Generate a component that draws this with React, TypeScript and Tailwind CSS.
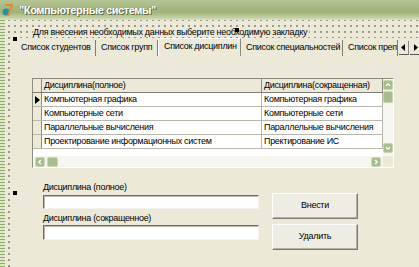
import React from "react";

const rows = [
  ["Компьютерная графика", "Компьютерная графика"],
  ["Компьютерные сети", "Компьютерные сети"],
  ["Параллельные вычисления", "Параллельные вычисления"],
  ["Проектирование информационных систем", "Пректирование ИС"],
];

const tabs = [
  { label: "Список студентов", w: "w-[80px]" },
  { label: "Список групп", w: "w-[62px]" },
  { label: "Список дисциплин", w: "w-[83px]", active: true },
  { label: "Список специальностей", w: "w-[102px]" },
  { label: "Список преподавателей", w: "w-[55px]" },
];

const chevrons: Record<string, string> = {
  up: "M2.5 6 L5 3.5 L7.5 6",
  down: "M2.5 4 L5 6.5 L7.5 4",
  left: "M6 2.5 L3.5 5 L6 7.5",
  right: "M4 2.5 L6.5 5 L4 7.5",
};

const ScrollBtn = ({ dir }: { dir: string }) => (
  <div className="w-[10px] h-[10px] shrink-0 bg-[#a9bd8c] border border-[#c8d5b2] rounded-[2px] flex items-center justify-center">
    <svg width="10" height="10" viewBox="0 0 10 10">
      <path d={chevrons[dir]} fill="none" stroke="#ffffff" strokeWidth="1.6" />
    </svg>
  </div>
);

const Handle = ({ cls }: { cls: string }) => (
  <div className={"absolute w-[4px] h-[4px] bg-black " + cls} />
);

export default function App() {
  return (
    <div className="relative w-[419px] h-[267px] overflow-hidden bg-[#ece9d8] flex flex-col font-['Liberation_Sans',Arial,sans-serif] text-[9px] tracking-[-0.3px] text-black">
      {/* title bar */}
      <div className="h-[20px] shrink-0 flex items-center gap-[6px] pl-[2px] bg-[linear-gradient(180deg,#b4c494_0%,#9fb278_60%,#c6d2a9_90%,#dde5c8_100%)]">
        <svg width="11" height="13" viewBox="0 0 11 13">
          <circle cx="4" cy="8" r="3.5" fill="#2f8fa0" />
          <path d="M3 1 L10 1 L6 12" fill="none" stroke="#e08a2a" strokeWidth="2" />
        </svg>
        <span className="text-[11px] font-bold text-white tracking-[-0.4px] [text-shadow:1px_1px_0_#5d6b3e,-1px_0_0_#7d8a5c]">
          "Компьютерные системы"
        </span>
      </div>

      <div className="flex flex-1">
        {/* left frame strip */}
        <div className="w-[5px] shrink-0 bg-[repeating-linear-gradient(180deg,#8fae62_0px,#8fae62_1px,#dfe6cc_1px,#dfe6cc_3px)]" />

        <div className="flex-1 flex flex-col bg-[#ece9d8] bg-[radial-gradient(#9c9a8c_0.8px,transparent_1px)] bg-[size:6px_6px] bg-[position:1px_3px]">
          <div className="h-[18px] shrink-0 pt-[7px] pl-[28px]">
            <span className="bg-[#ece9d8] leading-[10px] block w-fit pr-[2px]">
              Для внесения необходимых данных выберите необходимую закладку
            </span>
          </div>

          <div className="flex-1 ml-[7px] bg-[#ece9d8] flex flex-col">
            {/* tabs */}
            <div className="h-[18px] shrink-0 flex items-end pl-[4px]">
              {tabs.map((t) => (
                <div
                  key={t.label}
                  className={
                    "shrink-0 overflow-hidden whitespace-nowrap flex items-center px-[5px] " +
                    t.w +
                    (t.active
                      ? " h-[18px] pb-[2px] border-l border-t border-r border-l-white border-t-white border-r-[#8c8a7f] bg-[#ece9d8]"
                      : " h-[16px] border-r border-[#7f7d72]")
                  }
                >
                  {t.label}
                </div>
              ))}
              <div className="flex items-center h-[16px] ml-[1px] gap-[1px]">
                <div className="w-[10px] h-[14px] flex items-center justify-center border-b border-[#555] border-r border-r-[#8c8a7f]">
                  <svg width="5" height="7" viewBox="0 0 5 7"><path d="M4 0 L0 3.5 L4 7Z" fill="#000" /></svg>
                </div>
                <div className="w-[10px] h-[14px] flex items-center justify-center border-b border-[#555]">
                  <svg width="5" height="7" viewBox="0 0 5 7"><path d="M1 0 L5 3.5 L1 7Z" fill="#000" /></svg>
                </div>
              </div>
            </div>

            {/* grid */}
            <div className="pt-[22px] pl-[20px]">
              <div className="w-[362px] h-[90px] flex flex-col border border-t-[#8f8d82] border-l-[#8f8d82] border-b-white border-r-white bg-white">
                <div className="flex h-[77px]">
                  <div className="w-[350px] flex flex-col">
                    <div className="flex h-[14px] bg-[#ece9d8] border-b border-[#7f7d72]">
                      <div className="w-[9px] border-r border-[#8f8d82]" />
                      <div className="w-[220px] pl-[2px] flex items-center border-r border-[#8f8d82] whitespace-nowrap">
                        Дисциплина(полное)
                      </div>
                      <div className="flex-1 pl-[2px] flex items-center border-r border-[#8f8d82] whitespace-nowrap">
                        Дисциплина(сокращенная)
                      </div>
                    </div>
                    {rows.map((r, i) => (
                      <div key={i} className="flex h-[14px] border-b border-[#b8b6aa]">
                        <div className="w-[9px] bg-[#ece9d8] border-r border-[#8f8d82] flex items-center justify-center">
                          {i === 0 && (
                            <svg width="5" height="8" viewBox="0 0 5 8"><path d="M0 0 L5 4 L0 8Z" fill="#000" /></svg>
                          )}
                        </div>
                        <div className="w-[220px] pl-[2px] flex items-center border-r border-[#b8b6aa] whitespace-nowrap overflow-hidden">
                          {r[0]}
                        </div>
                        <div className="flex-1 pl-[2px] flex items-center border-r border-[#b8b6aa] whitespace-nowrap overflow-hidden">
                          {r[1]}
                        </div>
                      </div>
                    ))}
                  </div>
                  {/* vertical scrollbar */}
                  <div className="w-[10px] flex flex-col bg-[#f6f5ef]">
                    <div className="mt-[1px]"><ScrollBtn dir="up" /></div>
                    <div className="mt-[1px] h-[12px] w-[10px] bg-[#a9bd8c] border border-[#c8d5b2] rounded-[2px]" />
                    <div className="flex-1" />
                    <div className="mb-[3px]"><ScrollBtn dir="down" /></div>
                  </div>
                </div>
                {/* horizontal scrollbar */}
                <div className="flex h-[11px]">
                  <div className="w-[350px] flex items-center bg-[#f6f5ef] pl-[2px] pr-[2px]">
                    <ScrollBtn dir="left" />
                    <div className="ml-[2px] w-[11px] h-[10px] bg-[#a9bd8c] border border-[#c8d5b2] rounded-[2px]" />
                    <div className="flex-1" />
                    <ScrollBtn dir="right" />
                  </div>
                  <div className="w-[10px] bg-[#ece9d8]" />
                </div>
              </div>
            </div>

            {/* form */}
            <div className="mt-[14px] pl-[31px] flex items-start gap-[13px]">
              <div className="w-[216px] flex flex-col">
                <div className="leading-[10px] h-[10px]">Дисциплина (полное)</div>
                <div className="mt-[3px] h-[14px] bg-white border border-t-[#6f6d62] border-l-[#6f6d62] border-b-[#f4f3ee] border-r-[#f4f3ee] shadow-[inset_1px_1px_0_#b9b7ab]" />
                <div className="mt-[4px] leading-[10px] h-[10px]">Дисциплина (сокращенное)</div>
                <div className="mt-[2px] h-[15px] bg-white border border-t-[#6f6d62] border-l-[#6f6d62] border-b-[#f4f3ee] border-r-[#f4f3ee] shadow-[inset_1px_1px_0_#b9b7ab]" />
              </div>
              <div className="mt-[11px] flex flex-col gap-[5px]">
                <div className="w-[86px] h-[26px] flex items-center justify-center bg-[#efede3] border border-t-white border-l-white border-b-[#7d7b70] border-r-[#7d7b70] shadow-[inset_-1px_-1px_0_#b3b1a5]">
                  Внести
                </div>
                <div className="w-[86px] h-[26px] flex items-center justify-center bg-[#efede3] border border-t-white border-l-white border-b-[#7d7b70] border-r-[#7d7b70] shadow-[inset_-1px_-1px_0_#b3b1a5]">
                  Удалить
                </div>
              </div>
            </div>
          </div>
        </div>
      </div>

      <Handle cls="left-[13px] top-[37px]" />
      <Handle cls="left-[235px] top-[28px]" />
      <Handle cls="left-[13px] top-[191px]" />
    </div>
  );
}
